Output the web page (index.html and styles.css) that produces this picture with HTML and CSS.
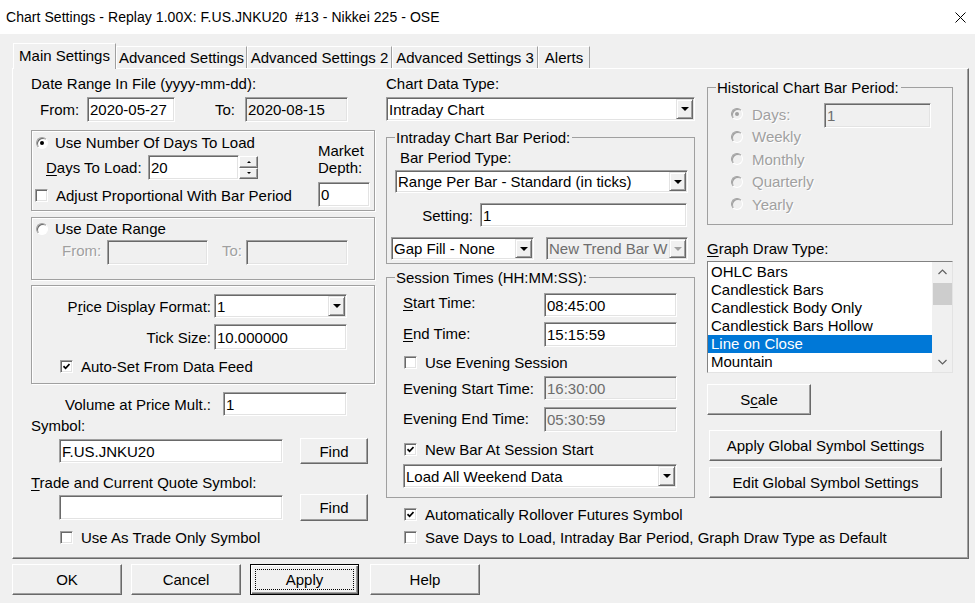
FILE: index.html
```html
<!DOCTYPE html>
<html>
<head>
<meta charset="utf-8">
<title>Chart Settings</title>
<link rel="stylesheet" href="styles.css">
</head>
<body>
<div class="titlebar">
  <span class="title">Chart Settings - Replay 1.00X: F.US.JNKU20  #13 - Nikkei 225 - OSE</span>
  <svg class="close" viewBox="0 0 11 11"><path d="M0.5 0.5L10.5 10.5M10.5 0.5L0.5 10.5" stroke="#000" stroke-width="1" fill="none"/></svg>
</div>

<div class="tabs">
  <div class="tab active w-main">Main Settings</div>
  <div class="tab w-adv">Advanced Settings</div>
  <div class="tab w-adv2">Advanced Settings 2</div>
  <div class="tab w-adv3">Advanced Settings 3</div>
  <div class="tab w-alerts">Alerts</div>
</div>

<div class="panel">
  <!-- LEFT COLUMN -->
  <div class="col left">
    <div class="line">Date Range In File (yyyy-mm-dd):</div>
    <div class="row r-from">
      <span class="l-from">From:</span>
      <div class="edit e-from">2020-05-27</div>
      <span class="l-to">To:</span>
      <div class="edit ro e-to">2020-08-15</div>
    </div>

    <div class="grp g1">
      <div class="g1-main">
        <div class="opt o-days"><span class="radio on"></span><span>Use Number Of Days To Load</span></div>
        <div class="row r-days">
          <span class="l-days"><u>D</u>ays To Load:</span>
          <div class="edit e-days">20</div>
          <div class="spin">
            <div class="sb"><span class="tri-up"></span></div>
            <div class="sb"><span class="tri-dn"></span></div>
          </div>
        </div>
        <div class="opt o-adj"><span class="chk"></span><span>Adjust Proportional With Bar Period</span></div>
      </div>
      <div class="md">
        <div class="md-l">Market<br>Depth:</div>
        <div class="edit e-md">0</div>
      </div>
    </div>

    <div class="grp g2">
      <div class="opt o-range"><span class="radio"></span><span>Use Date Range</span></div>
      <div class="row r-range">
        <span class="l-rfrom dis-t">From:</span>
        <div class="edit ro e-rfrom"></div>
        <span class="l-rto dis-t">To:</span>
        <div class="edit ro e-rto"></div>
      </div>
    </div>

    <div class="grp g3">
      <div class="row r-pdf">
        <span class="rlbl">P<u>r</u>ice Display Format:</span>
        <div class="combo c-pdf"><span class="ctext">1</span><span class="arr"><span class="tri-dn big"></span></span></div>
      </div>
      <div class="row r-tick">
        <span class="rlbl">Tick Size:</span>
        <div class="edit e-tick">10.000000</div>
      </div>
      <div class="opt o-auto"><span class="chk on"><svg viewBox="0 0 7 7" width="7" height="7"><path d="M0.5 3.2L2.6 5.3L6.5 1" stroke="#000" stroke-width="1.7" fill="none"/></svg></span><span>Auto-Set From Data Feed</span></div>
    </div>

    <div class="row r-vol">
      <span class="vlbl">Volume at Price Mult.:</span>
      <div class="edit e-vol">1</div>
    </div>
    <div class="line l-sym">Symbol:</div>
    <div class="row r-sym">
      <div class="edit e-sym">F.US.JNKU20</div>
      <div class="btn b-find">Find</div>
    </div>
    <div class="line l-trade"><u>T</u>rade and Current Quote Symbol:</div>
    <div class="row r-trade">
      <div class="edit e-sym e-trade"></div>
      <div class="btn b-find">Find</div>
    </div>
    <div class="opt o-tonly"><span class="chk"></span><span>Use As Trade Only Symbol</span></div>
  </div>

  <!-- MIDDLE COLUMN -->
  <div class="col mid">
    <div class="line">Chart Data Type:</div>
    <div class="combo c-cdt"><span class="ctext">Intraday Chart</span><span class="arr"><span class="tri-dn big"></span></span></div>

    <fieldset class="fg f-intra">
      <legend>Intraday Chart Bar Period:</legend>
      <div class="line l-bpt">Bar Period Type:</div>
      <div class="combo c-bpt"><span class="ctext">Range Per Bar - Standard (in ticks)</span><span class="arr"><span class="tri-dn big"></span></span></div>
      <div class="row r-set">
        <span class="l-set">Setting:</span>
        <div class="edit e-set">1</div>
      </div>
      <div class="row r-gap">
        <div class="combo c-gap"><span class="ctext">Gap Fill - None</span><span class="arr"><span class="tri-dn big"></span></span></div>
        <div class="combo dis c-ntb"><span class="ctext">New Trend Bar W</span><span class="arr"><span class="tri-dn big"></span></span></div>
      </div>
    </fieldset>

    <fieldset class="fg f-sess">
      <legend>Session Times (HH:MM:SS):</legend>
      <div class="row srow r-st"><span class="slbl"><u>S</u>tart Time:</span><div class="edit e-time">08:45:00</div></div>
      <div class="row srow r-et"><span class="slbl"><u>E</u>nd Time:</span><div class="edit e-time">15:15:59</div></div>
      <div class="opt o-eve"><span class="chk"></span><span>Use Evening Session</span></div>
      <div class="row srow r-est"><span class="slbl">Evening Start Time:</span><div class="edit ro dis e-time">16:30:00</div></div>
      <div class="row srow r-eet"><span class="slbl">Evening End Time:</span><div class="edit ro dis e-time e-eet">05:30:59</div></div>
      <div class="opt o-nb"><span class="chk on"><svg viewBox="0 0 7 7" width="7" height="7"><path d="M0.5 3.2L2.6 5.3L6.5 1" stroke="#000" stroke-width="1.7" fill="none"/></svg></span><span>New Bar At Session Start</span></div>
      <div class="combo c-wk"><span class="ctext">Load All Weekend Data</span><span class="arr"><span class="tri-dn big"></span></span></div>
    </fieldset>

    <div class="opt o-roll"><span class="chk on"><svg viewBox="0 0 7 7" width="7" height="7"><path d="M0.5 3.2L2.6 5.3L6.5 1" stroke="#000" stroke-width="1.7" fill="none"/></svg></span><span>Automatically Rollover Futures Symbol</span></div>
    <div class="opt o-save"><span class="chk"></span><span>Save Days to Load, Intraday Bar Period, Graph Draw Type as Default</span></div>
  </div>

  <!-- RIGHT COLUMN -->
  <div class="col right">
    <fieldset class="fg f-hist">
      <legend>Historical Chart Bar Period:</legend>
      <div class="hrow h-first"><span class="radio dis on"></span><span class="hlbl dis-t">Days:</span><div class="edit ro dis e-hdays">1</div></div>
      <div class="hrow"><span class="radio dis"></span><span class="hlbl dis-t">Weekly</span></div>
      <div class="hrow"><span class="radio dis"></span><span class="hlbl dis-t">Monthly</span></div>
      <div class="hrow"><span class="radio dis"></span><span class="hlbl dis-t">Quarterly</span></div>
      <div class="hrow"><span class="radio dis"></span><span class="hlbl dis-t">Yearly</span></div>
    </fieldset>

    <div class="line l-gdt"><u>G</u>raph Draw Type:</div>
    <div class="list">
      <div class="items">
        <div class="it">OHLC Bars</div>
        <div class="it">Candlestick Bars</div>
        <div class="it">Candlestick Body Only</div>
        <div class="it">Candlestick Bars Hollow</div>
        <div class="it sel">Line on Close</div>
        <div class="it">Mountain</div>
      </div>
      <div class="sbar">
        <div class="sarr"><svg width="9" height="6" viewBox="0 0 9 6"><path d="M0.5 5L4.5 1L8.5 5" stroke="#606060" stroke-width="1.2" fill="none"/></svg></div>
        <div class="thumb"></div>
        <div class="strack"></div>
        <div class="sarr"><svg width="9" height="6" viewBox="0 0 9 6"><path d="M0.5 1L4.5 5L8.5 1" stroke="#606060" stroke-width="1.2" fill="none"/></svg></div>
      </div>
    </div>
    <div class="btn b-scale">S<u>c</u>ale</div>
    <div class="btn b-glob b-apg">Apply Global Symbol Settings</div>
    <div class="btn b-glob b-edg">Edit Global Symbol Settings</div>
  </div>
</div>

<div class="bottom">
  <div class="btn b-ok">OK</div>
  <div class="btn b-cancel">Cancel</div>
  <div class="btn b-apply focus"><span class="focusbox">Apply</span></div>
  <div class="btn b-help">Help</div>
</div>
</body>
</html>
```

FILE: styles.css
```css
* { box-sizing: border-box; }
html, body { margin: 0; padding: 0; }
body {
  width: 975px;
  height: 603px;
  overflow: hidden;
  background: #f0f0f0;
  color: #000;
  font: 15px/17px "Liberation Sans", Arial, sans-serif;
}
u { text-decoration: underline; text-underline-offset: 2px; text-decoration-thickness: 1px; }

/* title bar */
.titlebar {
  height: 34px;
  background: #fff;
  display: flex;
  align-items: center;
  padding-left: 6px;
}
.title { flex: 1; white-space: pre; font-size: 14px; letter-spacing: 0.05px; }
.close { width: 11px; height: 11px; margin-right: 9px; display: block; }

/* tabs */
.tabs {
  display: flex;
  align-items: flex-end;
  height: 25px;
  margin-top: 9px;
  padding-left: 13px;
}
.tab {
  height: 22px;
  border: 1px solid;
  border-color: #fff #a0a0a0 transparent #fff;
  border-bottom: 0;
  text-align: center;
  line-height: 21px;
  white-space: nowrap;
  background: #f0f0f0;
}
.tab.active {
  height: 26px;
  margin-bottom: -1px;
  position: relative;
  z-index: 1;
  line-height: 23px;
}
.w-main { width: 103px; }
.w-adv { width: 131px; }
.w-adv2 { width: 145px; }
.w-adv3 { width: 146px; }
.w-alerts { width: 52px; }

/* panel */
.panel {
  margin-left: 12px;
  width: 957px;
  height: 491px;
  border: 1px solid;
  border-color: #fff #696969 #696969 #fff;
  box-shadow: inset -1px -1px 0 #a0a0a0;
  display: flex;
  align-items: flex-start;
  padding: 6px 0 0 18px;
}
.col { display: flex; flex-direction: column; align-items: flex-start; }
.left { width: 344px; }
.mid { width: 309px; margin-left: 11px; }
.right { width: 246px; margin-left: 12px; }

/* generic */
.line { height: 17px; white-space: nowrap; }
.row { display: flex; align-items: center; flex: none; }
.opt { display: flex; align-items: center; height: 17px; white-space: nowrap; }
.dis-t { color: #a0a0a0; text-shadow: 1px 1px 0 #fff; }

.edit {
  height: 25px;
  background: #fff;
  border: 1px solid;
  border-color: #a0a0a0 #fff #fff #a0a0a0;
  box-shadow: inset 1px 1px 0 #696969, inset -1px -1px 0 #e3e3e3;
  display: flex;
  align-items: center;
  padding-left: 2px;
  white-space: nowrap;
  overflow: hidden;
  flex: none;
}
.edit.ro { background: #f0f0f0; }
.edit.dis { color: #6d6d6d; }

.combo {
  height: 24px;
  background: #fff;
  border: 1px solid;
  border-color: #a0a0a0 #fff #fff #a0a0a0;
  box-shadow: inset 1px 1px 0 #696969, inset -1px -1px 0 #e3e3e3;
  display: flex;
  align-items: stretch;
  padding: 1px;
  flex: none;
  white-space: nowrap;
}
.combo .ctext {
  flex: 1;
  display: flex;
  align-items: center;
  padding-left: 1px;
  overflow: hidden;
}
.combo .arr {
  width: 17px;
  flex: none;
  background: #f0f0f0;
  border: 1px solid;
  border-color: #e3e3e3 #696969 #696969 #e3e3e3;
  box-shadow: inset 1px 1px 0 #fff, inset -1px -1px 0 #a0a0a0;
  display: flex;
  align-items: center;
  justify-content: center;
}
.combo.dis { background: #f0f0f0; color: #6d6d6d; }
.combo.dis .tri-dn { border-top-color: #a0a0a0; }

.tri-dn {
  width: 0; height: 0;
  border-left: 3px solid transparent;
  border-right: 3px solid transparent;
  border-top: 3px solid #000;
}
.tri-up {
  width: 0; height: 0;
  border-left: 2px solid transparent;
  border-right: 2px solid transparent;
  border-bottom: 2px solid #000;
}
.tri-dn.big {
  border-left-width: 4px;
  border-right-width: 4px;
  border-top-width: 4px;
}

.btn {
  height: 31px;
  background: #f0f0f0;
  border: 1px solid;
  border-color: #fff #696969 #696969 #fff;
  box-shadow: inset -1px -1px 0 #a0a0a0;
  display: flex;
  align-items: center;
  justify-content: center;
  white-space: nowrap;
  flex: none;
}

.chk {
  width: 13px;
  height: 13px;
  flex: none;
  background: #fff;
  border: 1px solid;
  border-color: #a0a0a0 #fff #fff #a0a0a0;
  box-shadow: inset 1px 1px 0 #696969, inset -1px -1px 0 #e3e3e3;
  display: flex;
  align-items: center;
  justify-content: center;
}
.chk svg { display: block; }

.radio {
  width: 12px;
  height: 12px;
  flex: none;
  border-radius: 50%;
  background: #fff;
  border: 1px solid;
  border-color: #a0a0a0 #fff #fff #a0a0a0;
  box-shadow: inset 1px 1px 0 #696969;
  display: flex;
  align-items: center;
  justify-content: center;
}
.radio.on::after {
  content: "";
  width: 4px;
  height: 4px;
  border-radius: 50%;
  background: #000;
}
.radio.dis { background: #f0f0f0; box-shadow: inset 1px 1px 0 #a0a0a0; }
.radio.dis.on::after { background: #a0a0a0; }

.grp {
  border: 1px solid #a0a0a0;
  box-shadow: inset 1px 1px 0 #fff, 1px 1px 0 #fff;
  width: 344px;
  flex: none;
}

.fg {
  margin: 0;
  padding: 0;
  min-width: 0;
  border: 1px solid #a0a0a0;
  flex: none;
}
.fg legend {
  padding: 0 2px 0 1px;
  margin-left: 8px;
  line-height: 17px;
  white-space: nowrap;
}

/* ---------- left column ---------- */
.r-from { margin-top: 5px; height: 25px; }
.l-from { margin-left: 9px; width: 47px; }
.e-from { width: 88px; }
.l-to { margin-left: 40px; width: 30px; }
.e-to { width: 103px; }

.g1 { margin-top: 8px; height: 81px; display: flex; justify-content: space-between; }
.g1-main { padding-top: 3px; display: flex; flex-direction: column; align-items: flex-start; }
.o-days .radio { margin-left: 4px; margin-right: 7px; }
.r-days { margin-top: 4px; height: 25px; }
.l-days { margin-left: 14px; width: 102px; white-space: nowrap; }
.e-days { width: 91px; }
.spin { width: 19px; height: 23px; display: flex; flex-direction: column; }
.spin .sb {
  flex: 1;
  background: #f0f0f0;
  border: 1px solid;
  border-color: #fff #696969 #696969 #fff;
  box-shadow: inset -1px -1px 0 #a0a0a0;
  display: flex;
  align-items: center;
  justify-content: center;
}
.spin .tri-dn { border-left-width: 2px; border-right-width: 2px; border-top-width: 2px; }
.o-adj { margin-top: 7px; }
.o-adj .chk { margin-left: 3px; margin-right: 8px; }
.md { width: 52px; margin-right: 4px; padding-top: 11px; display: flex; flex-direction: column; }
.md-l { line-height: 17px; white-space: nowrap; }
.e-md { margin-top: 6px; width: 52px; }

.g2 { margin-top: 6px; height: 63px; padding-top: 2px; }
.o-range .radio { margin-left: 4px; margin-right: 7px; }
.r-range { margin-top: 3px; height: 25px; }
.l-rfrom { margin-left: 30px; width: 45px; margin-top: -4px; }
.e-rfrom { width: 101px; }
.l-rto { margin-left: 14px; width: 24px; margin-top: -4px; }
.e-rto { width: 102px; }

.g3 { margin-top: 5px; height: 99px; padding-top: 8px; }
.rlbl { width: 179px; text-align: right; margin-right: 3px; white-space: nowrap; }
.r-pdf { height: 24px; }
.c-pdf { width: 133px; }
.r-tick { margin-top: 6px; height: 26px; }
.e-tick { width: 133px; height: 26px; }
.o-auto { margin-top: 8px; }
.o-auto .chk { margin-left: 28px; margin-right: 8px; }

.r-vol { margin-top: 8px; height: 24px; }
.vlbl { width: 180px; text-align: right; white-space: nowrap; }
.e-vol { margin-left: 12px; width: 124px; height: 24px; }
.l-sym { margin-top: 0.5px; }
.r-sym { margin-top: 4.5px; height: 26px; }
.e-sym { margin-left: 28px; width: 224px; height: 24px; }
.b-find { margin-left: 17px; width: 68px; height: 26px; }
.l-trade { margin-top: 9.5px; }
.r-trade { margin-top: 3.5px; height: 27px; }
.e-trade { height: 25px; }
.r-trade .b-find { height: 27px; }
.o-tonly { margin-top: 7.5px; }
.o-tonly .chk { margin-left: 29px; margin-right: 8px; }

/* ---------- middle column ---------- */
.c-cdt { margin-top: 5px; width: 309px; }
.f-intra { margin-top: 8px; width: 309px; height: 135px; }
.l-bpt { margin-left: 13px; margin-top: 3px; }
.c-bpt { margin-top: 4px; margin-left: 8px; width: 293px; height: 23px; }
.r-set { margin-top: 10px; height: 24px; }
.l-set { width: 86px; text-align: right; margin-right: 7px; }
.e-set { width: 207px; height: 24px; }
.r-gap { margin-top: 10px; height: 23px; }
.c-gap { margin-left: 4px; width: 143px; height: 23px; }
.c-ntb { margin-left: 12px; width: 142px; height: 23px; }

.f-sess { margin-top: 5px; width: 309px; height: 228.5px; }
.srow .slbl { margin-left: 16px; width: 141px; white-space: nowrap; }
.e-time { width: 133px; height: 24px; }
.r-st { margin-top: 7px; height: 24px; }
.r-st .slbl { margin-top: -5px; }
.r-et { margin-top: 5px; height: 25px; }
.r-et .slbl { margin-top: -3px; }
.r-et .e-time { height: 25px; }
.o-eve { margin-top: 6.5px; }
.o-eve .chk, .o-nb .chk { margin-left: 17px; margin-right: 8px; }
.r-est { margin-top: 5.5px; height: 24px; }
.r-eet { margin-top: 7px; height: 25px; }
.r-eet .slbl { margin-top: -2px; }
.e-eet { height: 25px; }
.o-nb { margin-top: 8.5px; }
.c-wk { margin-top: 6.5px; margin-left: 16px; width: 274px; height: 24px; }

.o-roll { margin-top: 8px; }
.o-save { margin-top: 6px; }
.o-roll .chk, .o-save .chk { margin-left: 18px; margin-right: 8px; }

/* ---------- right column ---------- */
.f-hist { margin-top: 4px; width: 246px; height: 146px; padding-top: 6.75px; }
.hrow { display: flex; align-items: center; height: 22.5px; padding-left: 23px; }
.hrow .radio { margin-right: 9px; }
.hlbl { white-space: nowrap; }
.h-first .hlbl { width: 72px; }
.e-hdays { width: 107px; height: 25px; margin-top: 2px; }

.l-gdt { margin-top: 14.5px; }
.list {
  margin-top: 4.5px;
  width: 246px;
  height: 112px;
  background: #fff;
  border: 1px solid;
  border-color: #828282 #e3e3e3 #e3e3e3 #828282;
  display: flex;
  flex: none;
}
.items { flex: 1; padding-top: 1px; }
.it { height: 18px; line-height: 18px; padding-left: 3px; white-space: nowrap; }
.it.sel { background: #0078d7; color: #fff; }
.sbar { width: 20px; flex: none; background: #f0f0f0; display: flex; flex-direction: column; }
.sarr { height: 20px; display: flex; align-items: center; justify-content: center; }
.thumb { height: 22px; margin: 1px 0 0 1px; background: #cdcdcd; }
.strack { flex: 1; }

.b-scale { margin-top: 11px; width: 104px; }
.b-glob { margin-left: 2px; width: 233px; }
.b-apg { margin-top: 15px; }
.b-edg { margin-top: 6px; }

/* ---------- bottom buttons ---------- */
.bottom { display: flex; margin-top: 5px; padding-left: 12px; }
.b-ok { width: 110px; }
.b-cancel { margin-left: 9px; width: 110px; }
.b-apply { margin-left: 9px; width: 109px; }
.b-help { margin-left: 11px; width: 110px; }
.btn.focus {
  border-color: #000;
  box-shadow: inset 1px 1px 0 #fff, inset -1px -1px 0 #696969, inset -2px -2px 0 #a0a0a0;
  padding: 4px;
}
.focusbox {
  flex: 1;
  align-self: stretch;
  border: 1px dotted #000;
  display: flex;
  align-items: center;
  justify-content: center;
}
```
